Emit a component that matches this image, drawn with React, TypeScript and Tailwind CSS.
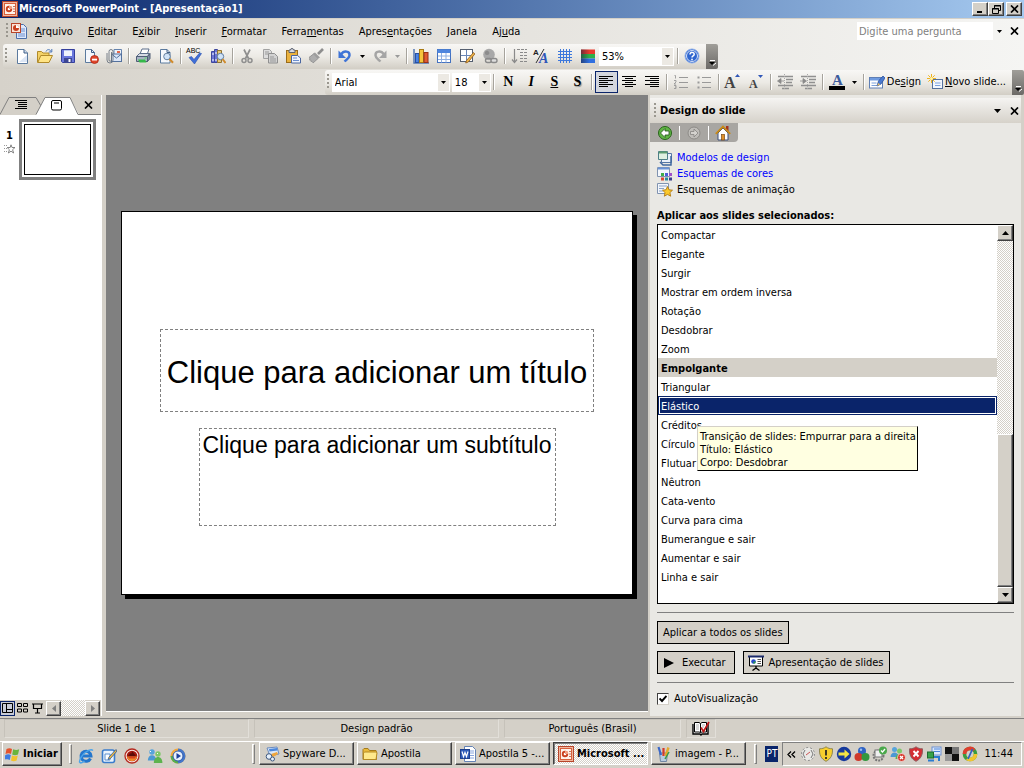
import React from "react";

const raised =
  "border border-t-white border-l-white border-b-[#404040] border-r-[#404040] bg-[#d4d0c8] shadow-[inset_-1px_-1px_0_#808080]";
const checker =
  "bg-[repeating-conic-gradient(#ffffff_0_25%,#d4d0c8_0_50%)] bg-[length:2px_2px]";

function Ico({ children, size = 16 }: { children: React.ReactNode; size?: number }) {
  return (
    <svg width={size} height={size} viewBox="0 0 16 16" className="shrink-0" fill="none" aria-hidden="true">
      {children}
    </svg>
  );
}

/* ---------- shared glyphs ---------- */

const Down = () => (
  <svg width="5" height="3" viewBox="0 0 5 3" aria-hidden="true" className="shrink-0">
    <path d="M0 0h5L2.5 3z" fill="currentColor" />
  </svg>
);

const Cross = () => (
  <svg width="9" height="8" viewBox="0 0 9 8" aria-hidden="true" className="shrink-0">
    <path d="M1 .5l7 7M8 .5l-7 7" stroke="#000" strokeWidth="1.7" />
  </svg>
);

const PptIcon = ({ size = 16 }: { size?: number }) => (
  <Ico size={size}>
    <rect x=".5" y=".5" width="15" height="15" fill="#f0b8a0" stroke="#b8452a" />
    <rect x="2.5" y="2.5" width="11" height="11" fill="#fff4ec" stroke="#d8603c" />
    <circle cx="7" cy="8" r="3.2" fill="#c9401f" />
    <circle cx="7" cy="8" r="1.300" fill="#fff" />
    <path d="M7 8V4.800A3.200 3.200 0 0 1 10.200 8z" fill="#f3a184" />
    <path d="M12 5v1M12 7.500v1M12 10v1" stroke="#a33318" strokeWidth="1.300" />
  </Ico>
);

const DocPpt = () => (
  <Ico>
    <path d="M5.500 1.500h7l3 3v11h-10z" fill="#dfe9fb" stroke="#4a6ea9" />
    <path d="M9 6h5M9 8h5M7 11h7M7 13h7" stroke="#6c8fd0" />
    <rect x=".5" y=".5" width="9" height="9" fill="#fbe3d7" stroke="#b8452a" />
    <circle cx="5" cy="5" r="3" fill="#c9401f" />
    <path d="M5 5V2a3 3 0 0 1 3 3z" fill="#fff" />
  </Ico>
);

/* ---------- standard toolbar ---------- */

const PageIcon = () => (
  <Ico>
    <path d="M3.500 1.500h6.500l3.500 3.500v10.500h-10z" fill="#fff" stroke="#5b7a9e" />
    <path d="M10 1.500v3.500h3.500" fill="#cfdcf0" stroke="#3f5e86" />
    <path d="M5 14h8V7z" fill="#dce6f5" />
  </Ico>
);
const OpenIcon = () => (
  <Ico>
    <path d="M.5 14.500v-11h4l1.500 1.500h6v3" fill="#f4d266" stroke="#b08a2a" />
    <path d="M.8 14.500l3-7h11.700l-3.500 7z" fill="#ffe485" stroke="#b08a2a" />
    <path d="M9 3.500c1-2.500 4-2.500 5 0M14.800 1v3h-3" stroke="#4a76b8" />
  </Ico>
);
const SaveIcon = () => (
  <Ico>
    <path d="M1.500 1.500h13v13h-12l-1-1z" fill="#6a77dc" stroke="#343f9c" />
    <rect x="4" y="2" width="8" height="6" fill="#eef2fc" />
    <rect x="4" y="10" width="8" height="5" fill="#3c4693" />
    <rect x="8.500" y="11" width="2" height="3" fill="#fff" />
    <path d="M4 2.500h8" stroke="#b9c4ee" />
  </Ico>
);
const PermIcon = () => (
  <Ico>
    <path d="M2.500 1.500h6l3 3v10h-9z" fill="#f4f7fc" stroke="#5b7a9e" />
    <path d="M8.500 1.500v3h3" stroke="#3f5e86" />
    <circle cx="11.500" cy="11.500" r="4" fill="#e0442a" stroke="#a82a17" strokeWidth=".8" />
    <rect x="9" y="10.700" width="5" height="1.800" fill="#fff" />
  </Ico>
);
const MailIcon = () => (
  <Ico>
    <path d="M8 1.500h7.500v8H8z" fill="#eef3fb" stroke="#6583ad" />
    <rect x="5.500" y="6" width="10" height="7.500" fill="#dbe6f7" stroke="#54719d" />
    <path d="M5.500 6l5 4 5-4" stroke="#54719d" />
    <rect x="11" y="3" width="3" height="2" fill="#e4674a" />
    <path d="M5.500 4v8a1 1 0 0 1-2.500 0V3.500a2 2 0 0 1 4 0V12a3 3 0 0 1-6 0V5" stroke="#6b7480" strokeWidth=".9" />
  </Ico>
);
const PrintIcon = () => (
  <Ico>
    <path d="M5 6l2-5h7l-2 6z" fill="#fff" stroke="#5d6e8b" />
    <path d="M1.500 8.500l3-3h10l-2 3z" fill="#d6dbe4" stroke="#5d6e8b" />
    <path d="M1.500 8.500h11v5h-11z" fill="#aab4c4" stroke="#4f5d75" />
    <path d="M12.500 8.500l2.500-3v5l-2.500 3z" fill="#7f8ca3" stroke="#4f5d75" />
    <path d="M3 11.500h7l1.500 3h-7z" fill="#35b94a" />
    <rect x="9.500" y="9.500" width="2" height="1" fill="#4fe05e" />
  </Ico>
);
const PreviewIcon = () => (
  <Ico>
    <path d="M2.500 1.500h6.500l3 3v10.500h-9.500z" fill="#f6f9fd" stroke="#5b7a9e" />
    <path d="M9 1.500v3h3" stroke="#3f5e86" />
    <circle cx="9" cy="8.500" r="3.300" fill="#cfe3f8" stroke="#67819f" />
    <path d="M11.500 11l3.500 3.800" stroke="#d08b2c" strokeWidth="2" />
  </Ico>
);
const SpellIcon = () => (
  <svg width="18" height="18" viewBox="0 0 18 18" aria-hidden="true" className="overflow-visible">
    <text x="0" y="6" fontSize="7" fontFamily="Liberation Sans" fill="#000">ABC</text>
    <path d="M3 10.500l2.500-1 2.500 3L13.500 6l2 .5L8.500 17z" fill="#3f6fd8" stroke="#2b50ad" strokeWidth=".6" />
  </svg>
);
const ResearchIcon = () => (
  <Ico>
    <path d="M1.500 3.500h3v11h-3zM4.500 1.500h3v13h-3z" fill="#6c76d8" stroke="#3e479c" />
    <path d="M7.500 2.500h4v12h-4z" fill="#e9c97a" stroke="#8f7432" />
    <path d="M2 6h2M5 5h2M2 12h2M5 12h2" stroke="#fff" />
    <circle cx="10.500" cy="8.500" r="3.200" fill="#cfe3f8" stroke="#5f7ca3" />
    <path d="M12.500 11l3 4" stroke="#d08b2c" strokeWidth="2" />
  </Ico>
);
const CutIcon = () => (
  <Ico>
    <path d="M5 1.500l4.500 9M11 1.500L6.500 10.500" stroke="#8f8f8f" strokeWidth="1.700" />
    <circle cx="5" cy="12.500" r="2" stroke="#8f8f8f" strokeWidth="1.500" />
    <circle cx="11" cy="12.500" r="2" stroke="#8f8f8f" strokeWidth="1.500" />
  </Ico>
);
const CopyIcon = () => (
  <Ico>
    <path d="M1.500 1.500h6l2 2v7h-8z" fill="#dcdcdc" stroke="#a2a2a2" />
    <path d="M6.500 5.500h6l3 3v6.500h-9z" fill="#d2d2d2" stroke="#8f8f8f" />
    <path d="M3 4h4M3 6h3M8 9h4M8 11h6M8 13h6" stroke="#999" />
  </Ico>
);
const PasteIcon = () => (
  <Ico>
    <rect x="1.500" y="2.500" width="11" height="12" fill="#eab23e" stroke="#9a6c1b" />
    <path d="M4 4.500V2h1.500a1.500 1.500 0 0 1 3 0H10v2.500z" fill="#d8dbe2" stroke="#5c6270" />
    <path d="M6.500 7.500h6l3 2.500v5h-9z" fill="#eef3fc" stroke="#4a66a0" />
    <path d="M8 10h4M8 12.500h6" stroke="#6b8fd0" />
  </Ico>
);
const BrushIcon = () => (
  <Ico>
    <path d="M15 1l-5 5" stroke="#8e8e8e" strokeWidth="2.600" />
    <path d="M7 4.500l5 5-2 1-5-5z" fill="#9d9d9d" />
    <path d="M5.500 6L1 9.500c1 .5 1 1.500.5 2.500 1-.3 1.500.5 1.500 1.500 1-.3 2 .5 2 1.500L10 10.500z" fill="#adadad" stroke="#949494" />
  </Ico>
);
const UndoIcon = () => (
  <Ico>
    <path d="M4 6.500C7 2 13 3 12.500 7.500c-.3 3-3 4-5 6" stroke="#3f74d6" strokeWidth="2.400" />
    <path d="M1.500 2.500v7.500h7.500z" fill="#3f74d6" />
  </Ico>
);
const RedoIcon = () => (
  <Ico>
    <path d="M12 6.500C9 2 3 3 3.500 7.500c.3 3 3 4 5 6" stroke="#a5a5a5" strokeWidth="2.400" />
    <path d="M14.500 2.500v7.500H7z" fill="#a5a5a5" />
  </Ico>
);
const ChartIcon = () => (
  <Ico>
    <path d="M1 1v14h15" stroke="#5277b5" strokeWidth="1.500" />
    <rect x="2.500" y="5.500" width="3.500" height="9" fill="#4a83e4" stroke="#2750a4" />
    <rect x="6.500" y="1.500" width="4" height="13" fill="#f5c53d" stroke="#a97b13" />
    <rect x="11" y="4.500" width="4" height="10" fill="#e05a32" stroke="#98311a" />
  </Ico>
);
const GridIcon = () => (
  <Ico>
    <rect x="1.500" y="1.500" width="13" height="13" fill="#fff" stroke="#4472c0" />
    <rect x="1.500" y="1.500" width="13" height="3.500" fill="#4f86de" />
    <path d="M5.500 5v9.500M10 5v9.500M2 8h12M2 11.500h12" stroke="#8fb0e2" />
  </Ico>
);
const DrawTableIcon = () => (
  <Ico>
    <rect x="1.500" y="1.500" width="12" height="12" fill="#fff" stroke="#555f70" />
    <path d="M7.500 2v11M2 7.500h11" stroke="#6b87b8" />
    <path d="M14.500 4.500l-7 8-.8 2.500 2.600-1 6.500-8z" fill="#f0b64a" stroke="#8f5a18" strokeWidth=".8" />
  </Ico>
);
const LinkIcon = () => (
  <Ico>
    <circle cx="7" cy="6.500" r="5.800" fill="#a8a8a8" />
    <path d="M3 4c2-2 3-1 4 0s0 3-2 3-2-1-2-3z" fill="#8c8c8c" />
    <rect x="3.500" y="10.500" width="6" height="4" rx="2" stroke="#8a8a8a" strokeWidth="1.400" />
    <rect x="9" y="10.500" width="6" height="4" rx="2" fill="#ddd" stroke="#8a8a8a" strokeWidth="1.400" />
  </Ico>
);
const ExpandIcon = () => (
  <Ico>
    <path d="M3.500 1v13M1 11.500l2.500 3 2.500-3" stroke="#8a8a8a" strokeWidth="1.200" />
    <path d="M6 1.500h10M9 4.500h7M9 7.500h7M9 10.500h7M9 13.500h7" stroke="#8a8a8a" strokeDasharray="3 1" />
  </Ico>
);
const FormatIcon = () => (
  <svg width="17" height="17" viewBox="0 0 17 17" aria-hidden="true" className="overflow-visible">
    <text x="0" y="7" fontSize="8" fontWeight="bold" fontFamily="Liberation Sans" fill="#222">A</text>
    <path d="M11 1L3 15" stroke="#333" />
    <text x="6" y="15" fontSize="14" fontWeight="bold" fontStyle="italic" fontFamily="Liberation Serif" fill="#2f56b8">A</text>
  </svg>
);
const HashIcon = () => (
  <Ico>
    <path d="M3.500 1v14M6.500 1v14M9.500 1v14M12.500 1v14M1 3.500h14M1 6.500h14M1 9.500h14M1 12.500h14" stroke="#3d78dc" />
  </Ico>
);
const ColorIcon = () => (
  <Ico>
    <defs>
      <linearGradient id="shade" x1="0" x2="1">
        <stop offset="0" stopColor="#1b2440" stopOpacity=".6" />
        <stop offset=".6" stopColor="#1b2440" stopOpacity="0" />
      </linearGradient>
    </defs>
    <rect x="1" y="1.500" width="14" height="4.500" fill="#e93a2c" />
    <rect x="1" y="6" width="14" height="4.500" fill="#2fb048" />
    <rect x="1" y="10.500" width="14" height="4.500" fill="#2f6fe0" />
    <rect x="1" y="1.500" width="14" height="13.500" fill="url(#shade)" />
  </Ico>
);
const HelpIcon = () => (
  <Ico>
    <circle cx="8" cy="8" r="7" fill="#2f66cf" stroke="#8fb0ea" />
    <circle cx="8" cy="8" r="5.500" stroke="#fff" strokeWidth=".8" />
    <path d="M6 6.500c0-3 4.300-2.600 4.200-.2C10.200 8 8 7.800 8 9.600" stroke="#fff" strokeWidth="1.500" />
    <rect x="7.200" y="10.700" width="1.600" height="1.600" fill="#fff" />
  </Ico>
);

/* ---------- formatting toolbar ---------- */

const lineSets = {
  left: "M1 2.500h14M1 4.500h9M1 6.500h14M1 8.500h9M1 10.500h14M1 12.500h9",
  center: "M1 2.500h14M4 4.500h8M1 6.500h14M4 8.500h8M1 10.500h14M4 12.500h8",
  right: "M1 2.500h14M6 4.500h9M1 6.500h14M6 8.500h9M1 10.500h14M6 12.500h9",
};
const Lines = ({ kind }: { kind: keyof typeof lineSets }) => (
  <Ico>
    <path d={lineSets[kind]} stroke="#000" />
  </Ico>
);
const NumList = () => (
  <Ico>
    <path d="M6 3.500h9M6 8.500h9M6 13.500h9" stroke="#999" />
    <path d="M1.500 1.500h1v3M1 6.500h2v1.500l-2 2h2M1 11.500h2v3H1M2 13h1" stroke="#999" strokeWidth=".9" />
  </Ico>
);
const BulList = () => (
  <Ico>
    <path d="M6 3.500h9M6 8.500h9M6 13.500h9" stroke="#999" />
    <path d="M1.500 3.500h2M1.500 8.500h2M1.500 13.500h2" stroke="#999" strokeWidth="2" />
  </Ico>
);
const Indent = ({ right }: { right?: boolean }) => (
  <Ico>
    <path d="M1 2.500h15M9 5.500h7M9 8.500h6M1 11.500h15M5 14.500h7" stroke="#909090" strokeWidth="1.300" />
    <path d={right ? "M0 7h3M3 4.500v5l3.500-2.500z" : "M3 7h4M4 4.500v5L.5 7z"} stroke="#8a8a8a" fill="#8a8a8a" strokeWidth=".8" />
    <path d="M7.500 0v16" stroke="#aaa" strokeDasharray="1 1" />
  </Ico>
);
const FontSize = ({ up }: { up?: boolean }) => (
  <svg width="18" height="18" viewBox="0 0 18 18" aria-hidden="true" className="overflow-visible">
    <text x={up ? 0 : 2} y="15" fontSize={up ? 16 : 12} fontWeight="bold" fontFamily="Liberation Serif" fill="#444">A</text>
    <path d={up ? "M11 4h5l-2.500-3z" : "M11 2h5l-2.500 3z"} fill="#2f56b8" />
  </svg>
);
const FontColor = () => (
  <svg width="18" height="18" viewBox="0 0 18 18" aria-hidden="true" className="overflow-visible">
    <text x="4" y="12" fontSize="15" fontWeight="bold" fontFamily="Liberation Serif" fill="#3b5b9c">A</text>
    <rect x="1" y="13" width="16" height="4" fill="#000" />
  </svg>
);
const DesignIcon = () => (
  <Ico>
    <rect x=".5" y="3.500" width="13" height="10.500" fill="#fff" stroke="#5f7fb5" />
    <rect x="1" y="4" width="12" height="2.500" fill="#6f9be0" />
    <path d="M2.500 9h5M2.500 11.500h7" stroke="#7aa0dc" />
    <path d="M14 2l-4.500 5-1.500 5 4-2 4-6z" fill="#4a7ad0" stroke="#2f529c" strokeWidth=".8" />
    <path d="M9.500 9l-1.500 3 3-1.500z" fill="#f2c25c" />
  </Ico>
);
const NewSlideIcon = () => (
  <Ico>
    <rect x="5.500" y="5.500" width="10" height="9" fill="#f2f6fd" stroke="#54719d" />
    <path d="M8 9h5.500M8 11.500h5.500" stroke="#7aa0dc" />
    <path d="M4.500 0v9M0 4.500h9M1.300 1.300l6.400 6.400M7.700 1.300L1.300 7.700" stroke="#f0b41e" />
    <circle cx="4.500" cy="4.500" r="1.500" fill="#fff3a8" />
  </Ico>
);

/* ---------- building blocks ---------- */

function Tool({ label, children, on }: { label: string; children: React.ReactNode; on?: boolean }) {
  return (
    <button
      type="button"
      aria-label={label}
      aria-pressed={on}
      className={
        on
          ? "flex h-[22px] w-[23px] shrink-0 items-center justify-center border border-[#0a246a] bg-[#d3d6de]"
          : "flex h-[22px] w-[23px] shrink-0 items-center justify-center"
      }
    >
      {children}
    </button>
  );
}
const More = ({ label, dim }: { label: string; dim?: boolean }) => (
  <button type="button" aria-label={label} className={`flex h-[22px] w-3 shrink-0 items-center justify-center ${dim ? "text-[#999]" : "text-black"}`}>
    <Down />
  </button>
);
const Sep = () => (
  <span className="flex w-[6px] shrink-0 justify-center">
    <span className="h-4 w-px bg-[#a6a39c] shadow-[1px_0_0_#fff]" />
  </span>
);
const Grip = () => (
  <span className="mx-[2px] h-4 w-[3px] shrink-0 bg-[linear-gradient(#9a978f_50%,transparent_50%)] bg-[length:2px_4px] bg-repeat-y" />
);
function Combo({ label, value, className }: { label: string; value: string; className: string }) {
  return (
    <span className={`relative flex h-[19px] shrink-0 bg-white ${className}`}>
      <select aria-label={label} defaultValue={value} className="w-full appearance-none bg-transparent pl-[3px] leading-[17px] outline-none">
        <option>{value}</option>
      </select>
      <span className="pointer-events-none absolute inset-y-px right-px flex w-[11px] items-center justify-center bg-[#ece9e3]">
        <Down />
      </span>
    </span>
  );
}
const Overflow = () => (
  <button type="button" aria-label="Opções da barra de ferramentas" className="ml-[2px] flex h-[25px] w-3 shrink-0 items-end justify-center rounded-r-[2px] bg-linear-to-b from-[#a09e99] to-[#6c6a67] pb-[3px]">
    <svg width="7" height="7" viewBox="0 0 7 7" aria-hidden="true">
      <path d="M1 1.500h5" stroke="#fff" />
      <path d="M0 3h6L3 6z" fill="#000" />
      <path d="M4 6.500L7 4" stroke="#fff" />
    </svg>
  </button>
);

const menus: [string, string, string][] = [
  ["", "A", "rquivo"], ["", "E", "ditar"], ["E", "x", "ibir"], ["", "I", "nserir"], ["", "F", "ormatar"],
  ["Ferra", "m", "entas"], ["Apres", "e", "ntações"], ["", "J", "anela"], ["Aj", "u", "da"],
];

function TitleBar() {
  const btn = `flex h-[14px] w-4 items-center justify-center ${raised}`;
  return (
    <header className="flex h-[19px] shrink-0 items-center border-b border-[#d4d0c8] bg-linear-to-r from-[#0a246a] to-[#a6caf0] pr-[2px] pl-[2px]">
      <PptIcon />
      <h1 className="ml-[1px] flex-1 text-[11px] font-bold text-white">Microsoft PowerPoint - [Apresentação1]</h1>
      <button type="button" aria-label="Minimizar" className={btn}>
        <svg width="8" height="8" viewBox="0 0 8 8"><path d="M1 7h5" stroke="#000" strokeWidth="2" /></svg>
      </button>
      <button type="button" aria-label="Restaurar" className={btn}>
        <svg width="9" height="9" viewBox="0 0 9 9" fill="none">
          <path d="M2.500 3V.5h6v5H7M2 1h7M.5 3.500h6v5h-6zM0 4h7" stroke="#000" />
        </svg>
      </button>
      <button type="button" aria-label="Fechar" className={`ml-[2px] ${btn}`}><Cross /></button>
    </header>
  );
}

function MenuBar() {
  return (
    <div className="flex h-6 shrink-0 items-center pr-[5px] pl-1">
      <Grip />
      <span className="flex"><DocPpt /></span>
      <nav className="ml-2 flex flex-1 gap-[15px] pt-px">
        {menus.map(([a, b, c]) => (
          <button type="button" key={a + b + c}>{a}<u className="underline-offset-1">{b}</u>{c}</button>
        ))}
      </nav>
      <input aria-label="Digite uma pergunta" placeholder="Digite uma pergunta" className="h-[18px] w-[136px] bg-white px-[2px] outline-none placeholder:text-[#808080]" />
      <More label="Perguntas recentes" />
      <button type="button" aria-label="Fechar janela" className="ml-[5px]"><Cross /></button>
    </div>
  );
}

const barBg = "bg-linear-to-b from-[#f8f7f5] via-[#eceae5] to-[#d2cec5]";

function Standard() {
  return (
    <div className="flex h-[26px] shrink-0 items-center">
      <div className={`ml-[3px] flex h-[25px] items-center rounded-[3px] ${barBg}`}>
        <Grip />
        <Tool label="Novo"><PageIcon /></Tool>
        <Tool label="Abrir"><OpenIcon /></Tool>
        <Tool label="Salvar"><SaveIcon /></Tool>
        <Tool label="Permissão"><PermIcon /></Tool>
        <Tool label="Email"><MailIcon /></Tool>
        <Sep />
        <Tool label="Imprimir"><PrintIcon /></Tool>
        <Tool label="Visualizar impressão"><PreviewIcon /></Tool>
        <Sep />
        <Tool label="Verificar ortografia"><SpellIcon /></Tool>
        <Tool label="Pesquisar"><ResearchIcon /></Tool>
        <Sep />
        <Tool label="Recortar"><CutIcon /></Tool>
        <Tool label="Copiar"><CopyIcon /></Tool>
        <Tool label="Colar"><PasteIcon /></Tool>
        <Tool label="Pincel"><BrushIcon /></Tool>
        <Sep />
        <Tool label="Desfazer"><UndoIcon /></Tool>
        <More label="Lista desfazer" />
        <Tool label="Refazer"><RedoIcon /></Tool>
        <More label="Lista refazer" dim />
        <Sep />
        <Tool label="Inserir gráfico"><ChartIcon /></Tool>
        <Tool label="Inserir tabela"><GridIcon /></Tool>
        <Tool label="Tabelas e bordas"><DrawTableIcon /></Tool>
        <Tool label="Inserir hiperlink"><LinkIcon /></Tool>
        <Sep />
        <Tool label="Expandir tudo"><ExpandIcon /></Tool>
        <Tool label="Mostrar formatação"><FormatIcon /></Tool>
        <Tool label="Mostrar grade"><HashIcon /></Tool>
        <Tool label="Cor"><ColorIcon /></Tool>
        <Combo label="Zoom" value="53%" className="w-[75px]" />
        <Sep />
        <Tool label="Ajuda"><HelpIcon /></Tool>
        <span className="w-px" />
        <Overflow />
      </div>
    </div>
  );
}

function Formatting() {
  const serif = "font-['Liberation_Serif',serif] text-[14px] font-bold leading-none";
  return (
    <div className="flex h-[26px] shrink-0 items-center justify-end">
      <div className={`flex h-[25px] items-center rounded-l-[3px] ${barBg}`}>
        <Grip />
        <Combo label="Fonte" value="Arial" className="w-[118px]" />
        <Combo label="Tamanho da fonte" value="18" className="ml-[2px] w-[39px]" />
        <Sep />
        <Tool label="Negrito"><span className={serif}>N</span></Tool>
        <Tool label="Itálico"><span className={`italic ${serif}`}>I</span></Tool>
        <Tool label="Sublinhado"><span className={`underline ${serif}`}>S</span></Tool>
        <Tool label="Sombra"><span className={`[text-shadow:1px_1px_1px_#888] ${serif}`}>S</span></Tool>
        <Sep />
        <Tool label="Alinhar à esquerda" on><Lines kind="left" /></Tool>
        <Tool label="Centralizar"><Lines kind="center" /></Tool>
        <Tool label="Alinhar à direita"><Lines kind="right" /></Tool>
        <Sep />
        <Tool label="Numeração"><NumList /></Tool>
        <Tool label="Marcadores"><BulList /></Tool>
        <Sep />
        <Tool label="Aumentar fonte"><FontSize up /></Tool>
        <Tool label="Diminuir fonte"><FontSize /></Tool>
        <Sep />
        <Tool label="Diminuir recuo"><Indent /></Tool>
        <Tool label="Aumentar recuo"><Indent right /></Tool>
        <Sep />
        <Tool label="Cor da fonte"><FontColor /></Tool>
        <More label="Cores da fonte" />
        <Sep />
        <button type="button" className="ml-[2px] flex items-center gap-[2px]">
          <DesignIcon /><span>De<u className="underline-offset-1">s</u>ign</span>
        </button>
        <button type="button" className="ml-[6px] flex items-center gap-[2px]">
          <NewSlideIcon /><span><u className="underline-offset-1">N</u>ovo slide...</span>
        </button>
        <span className="w-1" />
        <Overflow />
      </div>
    </div>
  );
}

function Outline() {
  return (
    <aside className="flex w-[101px] shrink-0 flex-col">
      <div className="relative flex h-5 items-center">
        <svg width="101" height="20" viewBox="0 0 101 20" className="absolute inset-0" fill="none" aria-hidden="true">
          <path d="M0 19.500L9 2.500H36L41 11" stroke="#808080" />
          <path d="M36 20L45 2.500H70L79 19.500V20z" fill="#fff" />
          <path d="M36 19.500L45 2.500H70L78 19.500H101" stroke="#808080" />
        </svg>
        <button type="button" aria-label="Tópicos" className="relative ml-[14px] flex w-4">
          <svg width="13" height="10" viewBox="0 0 13 10" fill="none">
            <path d="M1 .5h12M4 2.500h9M4 4.500h9M4 6.500h9M1 8.500h12" stroke="#000" />
          </svg>
        </button>
        <button type="button" aria-label="Slides" className="relative ml-[21px] flex w-3">
          <svg width="12" height="11" viewBox="0 0 12 11" fill="none">
            <rect x=".5" y=".5" width="10" height="9.500" rx="1.500" stroke="#000" />
            <path d="M3 3h5" stroke="#000" />
          </svg>
        </button>
        <button type="button" aria-label="Fechar painel" className="relative ml-[21px]"><Cross /></button>
      </div>
      <div className="flex flex-1 items-start bg-white pt-1">
        <div className="flex w-[19px] flex-col items-center pt-[10px]">
          <b>1</b>
          <svg width="12" height="12" viewBox="0 0 12 12" fill="none" aria-hidden="true">
            <path d="M7 1.800l1 2.700h3L8.600 6.700l1 3.300L7 8.200 4.400 10l1-3.300L3.200 4.500h3z" stroke="#777" strokeWidth=".9" />
            <path d="M0 2.500h4M0 5.500h3M0 8.500h3" stroke="#999" strokeDasharray="1 1" />
          </svg>
        </div>
        <button type="button" aria-label="Slide 1" className="h-[61px] w-[77px] border-[3px] border-[#808080] p-[2px]">
          <span className="block h-full border border-black bg-white" />
        </button>
      </div>
      <div className="flex h-4 items-center">
        <button type="button" aria-label="Modo normal" className="flex h-[15px] w-[15px] items-center justify-center border border-[#0a246a] bg-[#c8ccd8]">
          <svg width="11" height="10" viewBox="0 0 11 10" fill="none"><path d="M.5.5h10v9H.5zM4.500 1v8M5 6.500h5" stroke="#000" /></svg>
        </button>
        <button type="button" aria-label="Classificação de slides" className="ml-[2px] flex">
          <svg width="12" height="10" viewBox="0 0 12 10" fill="none"><path d="M.5.5h4v3h-4zM6.500.5h4v3h-4zM.5 6h4v3h-4zM6.500 6h4v3h-4z" stroke="#000" /></svg>
        </button>
        <button type="button" aria-label="Apresentação" className="ml-[3px] flex">
          <svg width="12" height="11" viewBox="0 0 12 11" fill="none"><path d="M0 1h11M1.500 1v4.500h8V1M5.500 6v4M3 10h5" stroke="#000" strokeWidth="1.200" /></svg>
        </button>
        <button type="button" aria-label="Rolar à esquerda" className={`ml-[2px] flex h-[15px] w-[15px] items-center justify-center ${raised}`}>
          <svg width="4" height="7" viewBox="0 0 4 7"><path d="M4 0v7L0 3.500z" fill="#808080" /></svg>
        </button>
        <span className={`h-full flex-1 ${checker}`} />
        <button type="button" aria-label="Rolar à direita" className={`mr-[1px] flex h-[15px] w-[15px] items-center justify-center ${raised}`}>
          <svg width="4" height="7" viewBox="0 0 4 7"><path d="M0 0v7l4-3.500z" fill="#808080" /></svg>
        </button>
      </div>
    </aside>
  );
}

function Canvas() {
  return (
    <main className="mb-1 flex min-w-0 flex-1 items-center border-b border-white bg-[#808080] px-[15px] font-['Liberation_Sans',Arial,sans-serif]">
      <section aria-label="Slide" className="flex aspect-[4/3] w-full flex-col items-center border border-black bg-white pt-[117px] shadow-[4px_4px_0_#000]">
        <div className="flex h-[83px] w-[85%] items-center justify-center border border-dashed border-[#808080] pt-1 text-[31px] leading-9 whitespace-nowrap">
          Clique para adicionar um título
        </div>
        <div className="mt-4 flex h-[98px] w-[70%] justify-center border border-dashed border-[#808080] pt-[2px] text-[23px] leading-7 whitespace-nowrap">
          Clique para adicionar um subtítulo
        </div>
      </section>
    </main>
  );
}

const effects = [
  "Compactar", "Elegante", "Surgir", "Mostrar em ordem inversa", "Rotação", "Desdobrar", "Zoom", "Empolgante",
  "Triangular", "Elástico", "Créditos", "Círculo", "Flutuar", "Nêutron", "Cata-vento", "Curva para cima",
  "Bumerangue e sair", "Aumentar e sair", "Linha e sair",
];

function Effect({ name }: { name: string }) {
  if (name === "Empolgante") return <li role="presentation" className="h-[19px] bg-[#d4d0c8] pt-px pl-[3px] font-bold">{name}</li>;
  if (name === "Elástico")
    return (
      <li role="option" aria-selected="true" className="relative h-[19px] border border-[#0a246a] bg-[#0a246a]">
        <span className="block h-[17px] border border-white pl-px leading-[17px] text-white">{name}</span>
        <div role="tooltip" className="absolute top-[29px] left-[38px] z-10 border border-t-[#d4d0c8] border-l-[#d4d0c8] border-b-black border-r-black bg-[#ffffe1] pt-[3px] pr-px pb-[1px] pl-[2px] leading-[13px] whitespace-nowrap text-black">
          <p>Transição de slides: Empurrar para a direita</p>
          <p>Título: Elástico</p>
          <p>Corpo: Desdobrar</p>
        </div>
      </li>
    );
  return <li role="option" aria-selected="false" className="h-[19px] pt-px pl-[3px]">{name}</li>;
}

function TaskPane() {
  const flat = "flex h-[23px] items-center border border-black bg-[#d4d0c8] pt-px";
  return (
    <aside className="mr-[3px] ml-[2px] flex w-[371px] shrink-0 flex-col bg-[#e9e8e4]">
      <div className="mt-[3px] flex h-[25px] items-center bg-linear-to-b from-[#f5f4f2] to-[#d6d2ca] pr-[2px] pl-[2px]">
        <Grip />
        <h2 className="ml-px flex-1 pt-px font-bold">Design do slide</h2>
        <button type="button" aria-label="Outros painéis" className="mr-[9px] flex">
          <svg width="7" height="4" viewBox="0 0 7 4"><path d="M0 0h7L3.500 4z" /></svg>
        </button>
        <button type="button" aria-label="Fechar painel de tarefas"><Cross /></button>
      </div>
      <div className="flex h-[19px] w-[88px] items-center justify-between rounded-br-[4px] bg-[#a8a6a2] px-[7px]">
        <button type="button" aria-label="Voltar">
          <Ico><circle cx="8" cy="8" r="6.500" fill="#5fb544" stroke="#27631a" /><path d="M8 3.500L3.500 8 8 12.500V10h4V6H8z" fill="#fff" stroke="#1f5214" strokeWidth=".8" /></Ico>
        </button>
        <span className="h-[14px] w-px bg-white" />
        <button type="button" aria-label="Avançar">
          <Ico><circle cx="8" cy="8" r="6" fill="#bfbdb9" stroke="#8d8b87" /><path d="M8 4l4 4-4 4v-2.500H4.500v-3H8z" fill="#d4d2ce" stroke="#858380" strokeWidth=".8" /></Ico>
        </button>
        <span className="h-[14px] w-px bg-white" />
        <button type="button" aria-label="Página inicial">
          <Ico>
            <rect x="11" y="1" width="2.500" height="5" fill="#a3311d" />
            <path d="M3 8v7h10V8L8 3z" fill="#fff" stroke="#3d4f78" />
            <path d="M.8 8.800L8 1.600l7.200 7.200" stroke="#c98a16" strokeWidth="1.800" />
            <rect x="6.500" y="9.500" width="3" height="5.500" fill="#e0912a" stroke="#7c4a12" strokeWidth=".7" />
          </Ico>
        </button>
      </div>
      <div className="flex flex-1 flex-col px-[7px] pt-2">
        <nav className="flex flex-col leading-4">
          <a href="#modelos" className="flex items-center gap-1 text-[#0000ff]">
            <Ico>
              <path d="M4.500 3.500h10v9h-10z" fill="#e9f0fa" stroke="#5577a5" />
              <path d="M1.500 1.500h9v8h-9z" fill="#dff0e2" stroke="#4d7f86" />
              <path d="M2 2.500h8" stroke="#5c9c70" strokeWidth="2" /><path d="M3 12l3 3h8V6" stroke="#4068a0" strokeWidth="1.500" />
            </Ico>
            Modelos de design
          </a>
          <a href="#cores" className="flex items-center gap-1 text-[#0000ff]">
            <Ico>
              <path d="M.5 1.500h12v9H.5z" fill="#f4f7fc" stroke="#8093b0" /><path d="M1 2.500h11" stroke="#6b94d8" strokeWidth="2" />
              <path d="M4 7h3v3H4z" fill="#3fae49" /><path d="M8 7h3v3H8z" fill="#4d5fd8" /><path d="M12 7h3v3h-3z" fill="#a050c8" />
              <path d="M4 11.500h3v3H4z" fill="#d84a32" /><path d="M8 11.500h3v3H8z" fill="#2d8c9c" /><path d="M12 11.500h3v3h-3z" fill="#3a3f8c" />
            </Ico>
            Esquemas de cores
          </a>
          <a href="#animacao" className="flex items-center gap-1 text-black">
            <Ico>
              <path d="M.5 1.500h11v10H.5z" fill="#f4f7fc" stroke="#8093b0" /><path d="M2 4h8M2 6.500h5M2 9h4" stroke="#8aa3c8" />
              <path d="M10.500 4.500l1.500 3.300 3.500.4-2.600 2.400.8 3.600-3.200-1.800-3.200 1.800.8-3.600-2.600-2.400 3.500-.4z" fill="#fbc92c" stroke="#b07a12" strokeWidth=".9" />
            </Ico>
            Esquemas de animação
          </a>
        </nav>
        <h3 id="apply-label" className="mt-[10px] leading-4 font-bold">Aplicar aos slides selecionados:</h3>
        <div className="flex h-[380px] border border-black bg-white">
          <ul role="listbox" aria-labelledby="apply-label" className="min-w-0 flex-1 leading-5">
            {effects.map((e) => <Effect key={e} name={e} />)}
          </ul>
          <div className={`flex w-4 flex-col ${checker}`}>
            <button type="button" aria-label="Rolar para cima" className={`flex h-4 items-center justify-center ${raised}`}>
              <svg width="7" height="4" viewBox="0 0 7 4"><path d="M0 4h7L3.500 0z" /></svg>
            </button>
            <span className="flex-1" />
            <span className={`h-[153px] ${raised}`} />
            <button type="button" aria-label="Rolar para baixo" className={`flex h-4 items-center justify-center ${raised}`}>
              <svg width="7" height="4" viewBox="0 0 7 4"><path d="M0 0h7L3.500 4z" /></svg>
            </button>
          </div>
        </div>
        <hr className="mt-2 border-t border-[#808080]" />
        <button type="button" className={`mt-2 self-start px-[5px] ${flat}`}>Aplicar a todos os slides</button>
        <div className="mt-[7px] flex gap-2">
          <button type="button" className={`gap-2 pr-2 pl-[6px] ${flat}`}>
            <svg width="10" height="10" viewBox="0 0 10 10"><path d="M0 0v10l10-5z" /></svg>
            Executar
          </button>
          <button type="button" className={`gap-[5px] pr-[6px] pl-1 ${flat}`}>
            <Ico>
              <path d="M1.500 2v9h13V2" fill="#fff" stroke="#000" /><path d="M0 1.500h16" stroke="#1b2a6b" strokeWidth="2" />
              <circle cx="5.500" cy="6.500" r="2.300" fill="#2748d0" /><path d="M5.500 6.500h2.300a2.300 2.300 0 0 1-2.300 2.300z" fill="#28a040" />
              <path d="M9.500 4.500h3.500M9.500 6.500h3.500M9.500 8.500h3.500" stroke="#555" /><path d="M8 11v2M8 13l-3.500 2.500M8 13l3.500 2.500" stroke="#000" strokeWidth="1.300" />
            </Ico>
            Apresentação de slides
          </button>
        </div>
        <hr className="mt-2 border-t border-[#808080]" />
        <label className="mt-[9px] mb-[10px] flex items-center gap-[5px] leading-[14px]">
          <span className="relative flex">
            <input type="checkbox" defaultChecked className="peer h-3 w-3 appearance-none border border-t-[#404040] border-l-[#404040] border-b-[#d4d0c8] border-r-[#d4d0c8] bg-white" />
            <svg width="8" height="8" viewBox="0 0 8 8" fill="none" className="pointer-events-none absolute top-[2px] left-[2px] hidden peer-checked:block">
              <path d="M.5 3.500L3 6l4.500-5" stroke="#000" strokeWidth="1.900" />
            </svg>
          </span>
          AutoVisualização
        </label>
      </div>
    </aside>
  );
}

function StatusBar() {
  const cell = "flex h-[19px] items-center justify-center border border-t-[#c6c2ba] border-l-[#c6c2ba] border-b-[#e2dfd9] border-r-[#e2dfd9]";
  return (
    <footer className="flex h-[22px] shrink-0 items-start gap-[5px] px-1">
      <span className={`w-[245px] ${cell}`}>Slide 1 de 1</span>
      <span className={`w-[245px] ${cell}`}>Design padrão</span>
      <span className={`w-[177px] ${cell}`}>Português (Brasil)</span>
      <span className={`w-[30px] ${cell}`}>
        <svg width="18" height="15" viewBox="0 0 18 15" fill="none" aria-hidden="true">
          <path d="M1 3v10h7l1 1 1-1h6V3" fill="#fff" stroke="#000" strokeWidth="1.400" />
          <path d="M2.500 1.500H7l1.500 1v9L7 11H2.500zM8.500 2.500l1.500-1h4.500V11H10l-1.500.5" fill="#fff" stroke="#000" />
          <path d="M4 4h3M4 6h3M4 8h3M10 4h3M10 6h2" stroke="#999" strokeWidth=".8" />
          <path d="M9 6.500l2.500 4L17 1" stroke="#c01818" strokeWidth="1.700" />
        </svg>
      </span>
    </footer>
  );
}

const Divider = ({ className }: { className: string }) => (
  <span className={`h-5 w-[3px] shrink-0 border border-t-white border-l-white border-b-[#808080] border-r-[#808080] ${className}`} />
);

const Windows = () => (
  <Ico>
    <path d="M1.500 3c2-1 4-1 5.500 0L6 8C4.500 7 2.500 7 .5 8z" fill="#e5532c" />
    <path d="M8.200 3.200c2 1 4 1 6 0L13 8.500c-2 1-4 1-5.800 0z" fill="#6ab43c" />
    <path d="M.3 9c2-1 4-1 5.500 0l-1 5C3.300 13-.5 13-.8 14z" fill="#3f7be0" />
    <path d="M7 9.500c2 1 4 1 5.800 0l-1.200 5c-2 1-4 1-5.600 0z" fill="#f3c32c" />
  </Ico>
);
const IeIcon = () => (
  <Ico>
    <path d="M12.500 10.500A5 5 0 1 1 13 8H4" stroke="#2476cc" strokeWidth="3" />
    <path d="M15 2.500C12-.5 2 7 1.500 14c1 2 4 0 5-1" stroke="#4aa4ea" strokeWidth="1.500" />
  </Ico>
);
const DeskIcon = () => (
  <Ico>
    <rect x="1.500" y="2" width="12" height="12.500" rx="2" fill="#eaf3fd" stroke="#3a7ccc" strokeWidth="1.600" />
    <path d="M4 6h5v6H4z" fill="#fff" stroke="#5a8fd0" />
    <path d="M15 1.500L8 9l-1 2.500 2.500-1L16 3z" fill="#f5b93c" stroke="#27599c" strokeWidth=".8" />
  </Ico>
);
const NeroIcon = () => (
  <Ico>
    <circle cx="8" cy="8" r="7" fill="#fbe9e4" stroke="#b52a20" strokeWidth="1.300" />
    <circle cx="8" cy="8" r="5.300" fill="#a3160f" />
    <path d="M4 8.500c.5-2 1.500-1.500 2-3.500 1 1.500 2 0 2-1.500 1.500 1.500 3 2.500 4 5z" fill="#5a0d0a" />
    <path d="M3 8.500h10c0 6-10 6-10 0z" fill="#ee8a2c" />
    <path d="M4 8.500h8l-1 2H5z" fill="#d8421c" />
  </Ico>
);
const Buddies = () => (
  <Ico>
    <circle cx="5" cy="4" r="2.700" fill="#58a4dc" /><path d="M.8 12.500c0-7 8.400-7 8.400 0z" fill="#4c98d4" />
    <circle cx="11" cy="6" r="2.700" fill="#7fc86a" /><path d="M6.800 15c0-8 8.600-8 8.600 0z" fill="#5db34e" />
    <path d="M3 3.500h1M10 5.500h1" stroke="#fff" />
  </Ico>
);
const MediaIcon = () => (
  <Ico>
    <circle cx="8" cy="8" r="7.500" fill="#f0a83c" /><path d="M8 .5a7.500 7.500 0 0 1 0 15z" fill="#4477cc" /><path d="M.5 8A7.500 7.500 0 0 0 8 15.500V8z" fill="#57ae4e" />
    <circle cx="8" cy="8" r="5" fill="#e9f1fc" stroke="#2d58a8" /><path d="M6.500 5v6L11 8z" fill="#1c3f9c" />
  </Ico>
);
const SpyIcon = () => (
  <Ico>
    <path d="M3 2l10-1 2 7-9 2z" fill="#dbe8f8" stroke="#6b8bbd" /><path d="M5 3l8-1 .5 2.500-8 1z" fill="#4c88dd" />
    <path d="M7 8l6-2 1 2-5 3z" fill="#f0a53a" />
    <circle cx="5" cy="10.500" r="2.800" fill="#e6f0fb" stroke="#3e587f" /><circle cx="8.500" cy="13" r="2" fill="#e6f0fb" stroke="#3e587f" />
  </Ico>
);
const Folder = () => (
  <Ico>
    <path d="M1 13.500V3.500l1-1h4l1.500 2H14l.5 1v8z" fill="#e9b93a" stroke="#a57b1c" />
    <path d="M1.500 13.500V7l1-1h12l.5 1-1 6.500z" fill="#ffe98c" stroke="#b58a24" />
  </Ico>
);
const WordIcon = () => (
  <Ico>
    <path d="M4.500.5h8l3 3v12h-11z" fill="#fff" stroke="#6583b5" /><path d="M10 5h4M10 7h4M7 12h7M10 9.500h4" stroke="#88a5dd" />
    <rect x=".5" y="3.500" width="9" height="9" fill="#2f5cb8" stroke="#1d3f8c" />
    <path d="M2 5.500l1.500 5L5 6.500l1.500 4L8 5.500" stroke="#fff" strokeWidth="1.200" />
  </Ico>
);
const PaintIcon = () => (
  <Ico>
    <path d="M3.500 7h8l-1 8.500h-6z" fill="#b9cbe0" stroke="#7086a3" />
    <path d="M5 9L2.500 1" stroke="#3b68c8" strokeWidth="2.200" /><path d="M7.500 10V2" stroke="#d43a2a" strokeWidth="2.200" /><path d="M9.500 10l3-8.500" stroke="#e5a92c" strokeWidth="2.400" />
    <path d="M9 13l4-7" stroke="#379b45" strokeWidth="1.500" />
  </Ico>
);

const tasks: [string, React.ReactNode, boolean][] = [
  ["Spyware D...", <SpyIcon />, false], ["Apostila", <Folder />, false], ["Apostila 5 -...", <WordIcon />, false],
  ["Microsoft ...", <PptIcon />, true], ["imagem - P...", <PaintIcon />, false],
];

const tray: [string, React.ReactNode][] = [
  ["Rede", <Ico><circle cx="8" cy="8" r="6.500" fill="#e9e9e6" stroke="#8d8d8d" strokeDasharray="2 2" /><path d="M5 4l-2 4 2 4M11 4l2 4-2 4" stroke="#777" /><path d="M6 9l4-3" stroke="#c55" /></Ico>],
  ["Alerta", <Ico><path d="M8 .8c2 1.500 4 2 6.500 2 .3 6-1.500 10-6.500 12.500C3 12.800 1.200 8.800 1.500 2.800 4 2.800 6 2.300 8 .8z" fill="#f7cf2e" stroke="#8e8652" /><path d="M8 4v5.500M8 11v2" stroke="#222" strokeWidth="1.700" /></Ico>],
  ["Atualizar", <Ico><circle cx="8" cy="8" r="7.200" fill="#173a9c" /><path d="M8.500 3.500L13.500 8l-5 4.500v-3H2.500v-3h6z" fill="#f3e545" /></Ico>],
  ["Cores", <Ico><circle cx="8" cy="5" r="4" fill="#2f62c4" /><circle cx="4.500" cy="11" r="4" fill="#cf3a2c" /><circle cx="11.500" cy="11" r="4" fill="#34963e" /><circle cx="7" cy="3.700" r="1.200" fill="#9bbcf0" /></Ico>],
  ["Dispositivo", <Ico><circle cx="6.500" cy="9.500" r="5" stroke="#777" strokeDasharray="2 1" strokeWidth="2" /><rect x="3" y="4" width="7" height="7" fill="#efefef" stroke="#777" /><circle cx="11" cy="4.500" r="4" fill="#4aa84b" /><path d="M9 4.500l1.500 1.500L13 3" stroke="#fff" strokeWidth="1.300" /></Ico>],
  ["Messenger", <Ico><circle cx="4.500" cy="3.500" r="2.500" fill="#58a4dc" /><path d="M.5 11c0-6 8-6 8 0z" fill="#4c98d4" /><circle cx="9.500" cy="5" r="2.500" fill="#7fc86a" /><path d="M5.500 13c0-7 8-7 8 0z" fill="#5db34e" /><circle cx="11.500" cy="11.500" r="4" fill="#d63a2d" stroke="#fff" strokeWidth=".6" /><path d="M10 10l3 3M13 10l-3 3" stroke="#fff" strokeWidth="1.300" /></Ico>],
  ["Segurança", <Ico><path d="M8 .8c2 1.500 4 2 6.500 2 .3 6-1.500 10-6.500 12.500C3 12.800 1.200 8.800 1.500 2.800 4 2.800 6 2.300 8 .8z" fill="#d32f34" stroke="#8e5f62" /><path d="M5.500 5l5 5.500M10.500 5l-5 5.500" stroke="#fff" strokeWidth="1.900" /></Ico>],
  ["Conexão", <Ico><rect x="6" y="1" width="9" height="8" fill="#dbe8fb" stroke="#6c8fd0" /><path d="M8 3h6M8 5.500h6" stroke="#4c86dd" /><rect x="1.500" y="6" width="6" height="6" fill="#37a24a" stroke="#1d6b2d" /><path d="M2 14.500h6M8 11h5v4" stroke="#2a7bd0" strokeWidth="2" /></Ico>],
  ["Vídeo", <Ico><rect x="1" y="1" width="7" height="7" fill="#111" /><rect x="8" y="8" width="7" height="7" fill="#111" /><rect x="8" y="1" width="7" height="7" fill="#777" /><rect x="1" y="8" width="7" height="7" fill="#999" /></Ico>],
  ["Antivírus", <Ico><circle cx="8" cy="8" r="5.500" stroke="#3b9c3f" strokeWidth="3.600" /><path d="M2.500 8A5.500 5.500 0 0 1 12 4.200" stroke="#df3f2f" strokeWidth="3.600" /><path d="M13.500 8A5.500 5.500 0 0 1 5 12.600" stroke="#f2c52d" strokeWidth="3.600" /><path d="M10.500 3L6 13" stroke="#2f62c4" strokeWidth="1.800" /></Ico>],
];

function TaskBar() {
  const quick: [string, React.ReactNode][] = [
    ["Internet Explorer", <IeIcon />], ["Área de trabalho", <DeskIcon />], ["Nero", <NeroIcon />], ["Contatos", <Buddies />], ["Media Player", <MediaIcon />],
  ];
  return (
    <nav aria-label="Barra de tarefas" className="flex h-7 shrink-0 items-start border-t border-white px-[2px]">
      <button type="button" className={`flex h-6 w-[60px] shrink-0 items-center gap-[2px] pl-[2px] font-bold ${raised}`}>
        <Windows />Iniciar
      </button>
      <Divider className="mt-[2px] ml-[7px]" />
      <div className="flex w-[173px] shrink-0 gap-[7px] self-center pl-[6px]">
        {quick.map(([name, icon]) => <button type="button" key={name} aria-label={name}>{icon}</button>)}
      </div>
      <Divider className="mt-[2px] ml-[7px]" />
      <div className="ml-1 flex min-w-0 flex-1 gap-[3px]">
        {tasks.map(([name, icon, on]) => (
          <button
            type="button"
            key={name}
            className={`flex h-[23px] w-[95px] items-center gap-[3px] pl-1 whitespace-nowrap ${
              on ? `border border-t-[#404040] border-l-[#404040] border-b-white border-r-white font-bold shadow-[inset_1px_1px_0_#808080] ${checker}` : raised
            }`}
          >
            {icon}{name}
          </button>
        ))}
      </div>
      <Divider className="mt-[2px] mr-2" />
      <span className="mt-1 flex h-4 w-[13px] shrink-0 items-center justify-center bg-[#0a246a] text-[10px] text-white">PT</span>
      <div className="ml-1 flex h-6 shrink-0 items-center gap-[2px] border border-t-[#808080] border-l-[#808080] border-b-white border-r-white pr-2 pl-1">
        <button type="button" aria-label="Mostrar ícones ocultos" className="mr-[2px]">
          <svg width="9" height="7" viewBox="0 0 9 7" fill="none"><path d="M4 .5l-3 3 3 3M8 .5l-3 3 3 3" stroke="#000" strokeWidth="1.300" /></svg>
        </button>
        {tray.map(([name, icon]) => <span key={name} title={name}>{icon}</span>)}
        <time className="ml-1">11:44</time>
      </div>
    </nav>
  );
}

export default function App() {
  return (
    <div className="flex min-h-screen flex-col bg-[#d4d0c8] font-['DejaVu_Sans_Condensed','Noto_Sans',sans-serif] text-[11px] leading-[14px] text-black">
      <TitleBar />
      <div className="flex flex-col bg-linear-to-r from-[#d6d2ca] to-[#f5f5f3]">
        <MenuBar />
        <Standard />
        <Formatting />
      </div>
      <div className="flex flex-1">
        <Outline />
        <div className="w-[5px] shrink-0 border-l border-white bg-[#d4d0c8]" />
        <Canvas />
        <TaskPane />
      </div>
      <div className="mt-[2px] border-t border-[#808080]" />
      <StatusBar />
      <TaskBar />
    </div>
  );
}
